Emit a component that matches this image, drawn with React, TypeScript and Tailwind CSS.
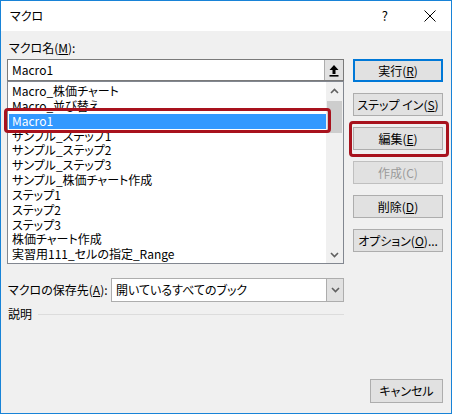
const font = { fontFamily: '"Noto Sans CJK JP", "Noto Sans", sans-serif' };

const macros = [
  "Macro_株価チャート",
  "Macro_並び替え",
  "Macro1",
  "サンプル_ステップ1",
  "サンプル_ステップ2",
  "サンプル_ステップ3",
  "サンプル_株価チャート作成",
  "ステップ1",
  "ステップ2",
  "ステップ3",
  "株価チャート作成",
  "実習用111_セルの指定_Range",
];

function Btn({
  children,
  primary,
  disabled,
}: {
  children: React.ReactNode;
  primary?: boolean;
  disabled?: boolean;
}) {
  const base =
    "h-[23px] w-[90px] flex items-center justify-center text-[12px] leading-none whitespace-nowrap";
  if (primary)
    return (
      <div className={`${base} border-2 border-[#0078d7] bg-[#e1e1e1] text-black`}>
        {children}
      </div>
    );
  if (disabled)
    return (
      <div className={`${base} border border-[#bfbfbf] bg-[#e1e1e1] text-[#9a9a9a]`}>
        {children}
      </div>
    );
  return (
    <div className={`${base} border border-[#adadad] bg-[#e1e1e1] text-black`}>
      {children}
    </div>
  );
}

function Chevron({ down }: { down?: boolean }) {
  return (
    <svg width="9" height="6" viewBox="0 0 9 6">
      <path
        d={down ? "M1 1 L4.5 4.5 L8 1" : "M1 5 L4.5 1.5 L8 5"}
        fill="none"
        stroke="#606060"
        strokeWidth="1.6"
      />
    </svg>
  );
}

export default function App() {
  return (
    <div
      style={font}
      className="relative w-[452px] h-[414px] border border-[#1883d7] bg-[#f0f0f0] flex flex-col text-black overflow-hidden [font-feature-settings:'palt']"
    >
      {/* title bar */}
      <div className="h-[30px] bg-white flex items-center shrink-0">
        <span className="pl-[9px] text-[12px]">マクロ</span>
        <span className="ml-auto mr-[36px] text-[13px]">?</span>
        <svg width="12" height="12" viewBox="0 0 12 12" className="mr-[15px]">
          <path d="M0.5 0.5 L11.5 11.5 M11.5 0.5 L0.5 11.5" stroke="#000" strokeWidth="1" />
        </svg>
      </div>

      <div className="flex">
        {/* left column */}
        <div className="w-[343px] pl-[6px] pt-[9px] flex flex-col">
          <div className="h-[16px] pl-[2px] text-[12px] leading-[16px]">
            マクロ名(<u>M</u>):
          </div>
          <div className="mt-[3px] h-[22px] border border-[#7a7a7a] bg-white flex items-center">
            <span className="pl-[4px] text-[12px]">Macro1</span>
            <div className="ml-auto h-full w-[19px] bg-[#e1e1e1] border-l border-[#adadad] flex items-center justify-center">
              <svg width="10" height="13" viewBox="0 0 10 13">
                <path d="M5 1 L9.5 6 L6.5 6 L6.5 10 L3.5 10 L3.5 6 L0.5 6 Z" fill="#000" />
                <rect x="0.5" y="11" width="9" height="1.6" fill="#000" />
              </svg>
            </div>
          </div>
          <div className="h-[183px] border border-[#828790] bg-white flex">
            <div className="flex-1 pt-[2px] pl-[1px]">
              {macros.map((m) => (
                <div
                  key={m}
                  className={`h-[14.85px] leading-[14.85px] pl-[3px] text-[12px] whitespace-nowrap ${
                    m === "Macro1" ? "bg-[#3399ff] text-white" : ""
                  }`}
                >
                  {m}
                </div>
              ))}
            </div>
            <div className="w-[17px] bg-[#f0f0f0] flex flex-col items-center">
              <div className="h-[17px] flex items-center justify-center">
                <Chevron />
              </div>
              <div className="mt-[2px] h-[32px] w-[15px] bg-[#cdcdcd]" />
              <div className="mt-auto h-[17px] flex items-center justify-center">
                <Chevron down />
              </div>
            </div>
          </div>

          <div className="mt-[14px] flex items-center">
            <span className="pl-[1px] text-[12px] w-[104px] whitespace-nowrap">
              マクロの保存先(<u>A</u>):
            </span>
            <div className="flex-1 h-[24px] border border-[#adadad] bg-white flex items-center">
              <span className="pl-[4px] text-[12px]">開いているすべてのブック</span>
              <div className="ml-auto h-full w-[17px] bg-[#e1e1e1] border-l border-[#adadad] flex items-center justify-center">
                <Chevron down />
              </div>
            </div>
          </div>

          <div className="mt-[4px] flex items-center">
            <span className="pl-[1px] text-[12px] leading-[16px]">説明</span>
            <div className="ml-[6px] flex-1 h-px bg-[#dcdcdc]" />
          </div>
        </div>

        {/* right column */}
        <div className="pl-[9px] pt-[28px] flex flex-col gap-[11px]">
          <Btn primary>
            実行(<u>R</u>)
          </Btn>
          <Btn>
            ステップ イン(<u>S</u>)
          </Btn>
          <Btn>
            編集(<u>E</u>)
          </Btn>
          <Btn disabled>作成(C)</Btn>
          <Btn>
            削除(<u>D</u>)
          </Btn>
          <Btn>
            オプション(<u>O</u>)...
          </Btn>
        </div>
      </div>

      <div className="mt-auto pb-[10px] pr-[8px] flex justify-end">
        <div className="h-[24px] w-[73px] border border-[#adadad] bg-[#e1e1e1] flex items-center justify-center text-[12px]">
          キャンセル
        </div>
      </div>

      {/* red highlight marks */}
      <div className="absolute left-[3px] top-[107px] w-[327px] h-[25px] border-[3px] border-[#a8121d] rounded-[4px]" />
      <div className="absolute left-[348px] top-[120px] w-[100px] h-[36px] border-[3px] border-[#a8121d] rounded-[4px]" />
    </div>
  );
}
